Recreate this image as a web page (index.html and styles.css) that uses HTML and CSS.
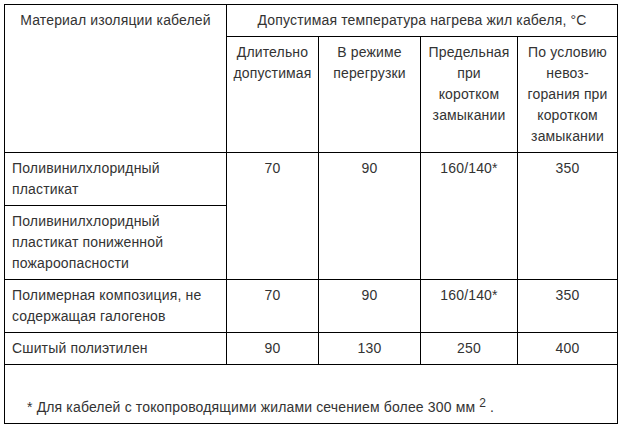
FILE: index.html
```html
<!DOCTYPE html>
<html lang="ru">
<head>
<meta charset="utf-8">
<title>Допустимая температура нагрева жил кабеля</title>
<link rel="stylesheet" href="styles.css">
</head>
<body>
<div class="page">
<table class="temp-table">
  <colgroup>
    <col class="c1">
    <col class="c2">
    <col class="c3">
    <col class="c4">
    <col class="c5">
  </colgroup>
  <thead>
    <tr>
      <th rowspan="2" class="head-main">Материал изоляции кабелей</th>
      <th colspan="4">Допустимая температура нагрева жил кабеля, °С</th>
    </tr>
    <tr>
      <th>Длительно допустимая</th>
      <th>В режиме перегрузки</th>
      <th>Предельная<br>при<br>коротком<br>замыкании</th>
      <th>По условию невоз-<br>горания при коротком замыкании</th>
    </tr>
  </thead>
  <tbody>
    <tr>
      <td class="name">Поливинилхлоридный пластикат</td>
      <td rowspan="2">70</td>
      <td rowspan="2">90</td>
      <td rowspan="2">160/140*</td>
      <td rowspan="2">350</td>
    </tr>
    <tr>
      <td class="name">Поливинилхлоридный пластикат пониженной пожароопасности</td>
    </tr>
    <tr>
      <td class="name">Полимерная композиция, не содержащая галогенов</td>
      <td>70</td>
      <td>90</td>
      <td>160/140*</td>
      <td>350</td>
    </tr>
    <tr>
      <td class="name">Сшитый полиэтилен</td>
      <td>90</td>
      <td>130</td>
      <td>250</td>
      <td>400</td>
    </tr>
    <tr>
      <td colspan="5" class="note">* Для кабелей с токопроводящими жилами сечением более 300 мм <sup>2</sup>.</td>
    </tr>
  </tbody>
</table>
</div>
</body>
</html>
```

FILE: styles.css
```css
html, body {
  margin: 0;
  padding: 0;
  background: #ffffff;
}

.page {
  padding: 4px;
}

.temp-table {
  border-collapse: collapse;
  table-layout: fixed;
  width: 613px;
  font-family: "Liberation Sans", Arial, sans-serif;
  font-size: 14px;
  line-height: 21px;
  letter-spacing: 0.15px;
  color: #333333;
}

.c1 { width: 222px; }
.c2 { width: 92px; }
.c3 { width: 102px; }
.c4 { width: 97px; }
.c5 { width: 100px; }

.temp-table th,
.temp-table td {
  border: 1px solid #000000;
  padding: 5px 4px;
  vertical-align: top;
  text-align: center;
  font-weight: normal;
}

.temp-table td.name {
  text-align: left;
  padding-left: 7px;
}

.temp-table td.note {
  text-align: left;
  padding: 32px 5px 5px 22px;
}

.note sup {
  font-size: 12px;
  line-height: 0;
  vertical-align: 5px;
  margin-right: 4px;
}
```
